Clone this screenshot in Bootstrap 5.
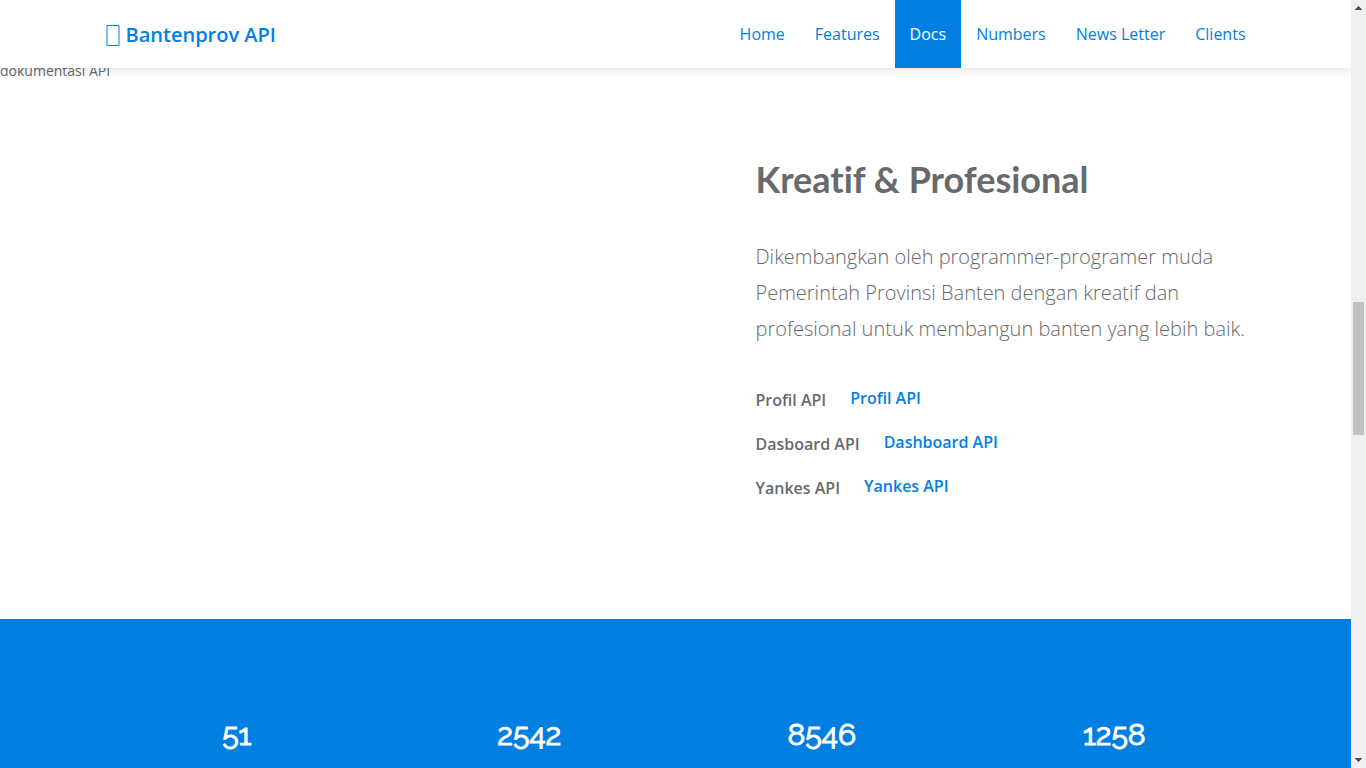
<!DOCTYPE html>
<html lang="id">
<head>
<meta charset="utf-8">
<meta name="viewport" content="width=device-width, initial-scale=1">
<title>Bantenprov API</title>
<link href="https://cdn.jsdelivr.net/npm/bootstrap@5.3.0/dist/css/bootstrap.min.css" rel="stylesheet">
<style>
  :root { --brand: #007fe2; --ink: #67696c; }
  body { font-family: "Open Sans", sans-serif; font-size: 14px; line-height: 20px; color: var(--ink); background: #fff; }
  .page-wrap { max-width: 1170px; padding-left: 15px; padding-right: 15px; }
  .site-header { z-index: 10; box-shadow: 0 0 12px rgba(0, 0, 0, .15); }
  .brand-link { font-size: 20px; font-weight: 600; line-height: 28px; padding-top: 2px; color: var(--brand); }
  .menu-link { display: block; padding: 22px 15px; font-size: 16px; line-height: 24px; color: var(--brand); text-decoration: none; }
  .menu-link.active { background: var(--brand); color: #fff; }
  .menu { margin-right: -15px; }
  .docs { padding-top: 61px; }
  .docs-text { padding: 73px 0 109px 80px; margin-right: -15px; }
  .docs-title { font: 700 36px/50px Lato, sans-serif; font-variant-ligatures: none; margin-bottom: 35px; }
  .docs-lead { font-size: 20px; font-weight: 300; line-height: 36px; margin-bottom: 31px; }
  .api-row { gap: 24px; height: 44px; font-size: 16px; font-weight: 600; line-height: 24px; }
  .api-row a { color: var(--brand); text-decoration: none; margin-bottom: 4px; }
  .numbers { background: var(--brand); color: #fff; padding-top: 96px; }
  .numbers-row { --bs-gutter-x: 30px; }
  .figure-num { font: 400 30px/40px Raleway, Lato, sans-serif; font-variant-numeric: oldstyle-nums; -webkit-text-stroke: 1px #fff; }
  .scroll-rail { width: 15px; background: #f0f0f0; }
  .scroll-thumb { width: 11px; background: #c1c1c1; }
</style>
</head>
<body>
<div class="d-flex vh-100 overflow-hidden">
  <div class="flex-grow-1 position-relative d-flex flex-column overflow-hidden">
    <header class="site-header position-absolute top-0 start-0 w-100 bg-white">
      <div class="page-wrap mx-auto d-flex justify-content-between align-items-center">
        <a href="#" class="brand-link d-flex align-items-center text-decoration-none">
          <svg width="20" height="24" viewBox="0 0 20 24" fill="none" stroke="currentColor" aria-hidden="true"><path d="M1 2.5h12v20h-12z"/></svg>
          <span>Bantenprov API</span>
        </a>
        <nav class="menu d-flex" aria-label="Menu">
          <a class="menu-link" href="#home">Home</a>
          <a class="menu-link" href="#features">Features</a>
          <a class="menu-link active" href="#docs" aria-current="true">Docs</a>
          <a class="menu-link" href="#numbers">Numbers</a>
          <a class="menu-link" href="#newsletter">News Letter</a>
          <a class="menu-link" href="#clients">Clients</a>
        </nav>
      </div>
    </header>
    <section id="docs" class="docs">
      <div>dokumentasi API</div>
      <div class="page-wrap mx-auto">
        <div class="row g-0">
          <div class="col-6 offset-6">
            <div class="docs-text">
              <h2 class="docs-title">Kreatif &amp; Profesional</h2>
              <p class="docs-lead">Dikembangkan oleh programmer-programer muda Pemerintah Provinsi Banten dengan kreatif dan profesional untuk membangun banten yang lebih baik.</p>
              <div class="api-row d-flex align-items-center"><span>Profil API</span><a href="#profil">Profil API</a></div>
              <div class="api-row d-flex align-items-center"><span>Dasboard API</span><a href="#dashboard">Dashboard API</a></div>
              <div class="api-row d-flex align-items-center"><span>Yankes API</span><a href="#yankes">Yankes API</a></div>
            </div>
          </div>
        </div>
      </div>
    </section>
    <section id="numbers" class="numbers flex-grow-1">
      <div class="page-wrap mx-auto">
        <div class="row numbers-row text-center">
          <div class="col-3 figure-num">51</div>
          <div class="col-3 figure-num">2542</div>
          <div class="col-3 figure-num">8546</div>
          <div class="col-3 figure-num">1258</div>
        </div>
      </div>
    </section>
  </div>
  <div class="scroll-rail flex-shrink-0 d-flex flex-column align-items-center" aria-hidden="true">
    <svg width="15" height="15" viewBox="0 0 15 15" fill="#505050" shape-rendering="crispEdges"><path d="M7 6h1v1h1v1h1v1h1v1H4V9h1V8h1V7h1z"/></svg>
    <div style="flex: 287 0 0"></div>
    <div class="scroll-thumb" style="flex: 133 0 0"></div>
    <div style="flex: 318 0 0"></div>
    <svg width="15" height="15" viewBox="0 0 15 15" fill="#505050" shape-rendering="crispEdges"><path d="M4 5h7v1h-1v1H9v1H8v1H7V8H6V7H5V6H4z"/></svg>
  </div>
</div>
<script src="https://cdn.jsdelivr.net/npm/bootstrap@5.3.0/dist/js/bootstrap.bundle.min.js"></script>
</body>
</html>
